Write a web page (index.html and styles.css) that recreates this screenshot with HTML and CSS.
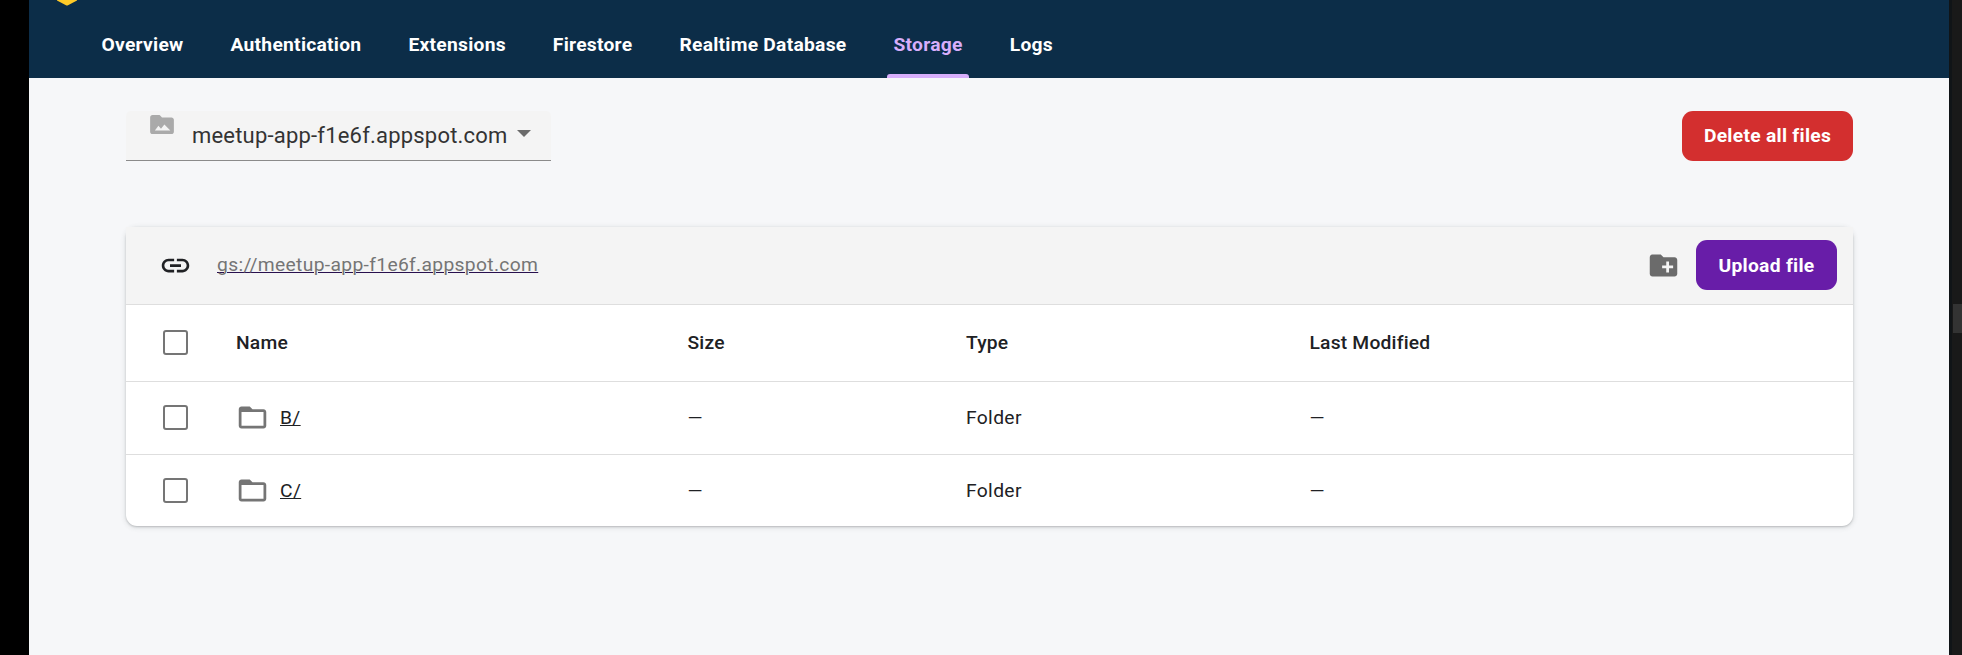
FILE: index.html
```html
<!DOCTYPE html>
<html lang="en">
<head>
<meta charset="utf-8">
<title>Storage</title>
<link rel="stylesheet" href="styles.css">
</head>
<body>
<div class="window">
  <main class="page">
    <header class="appbar">
      <svg class="logo" viewBox="0 0 20 6" width="20" height="6"><path d="M0 0h20v.6L11 5.2q-1 .5-2 0L0 .6z" fill="#ffca28"/></svg>
      <nav class="tabs">
        <a class="tab">Overview</a>
        <a class="tab">Authentication</a>
        <a class="tab">Extensions</a>
        <a class="tab">Firestore</a>
        <a class="tab">Realtime Database</a>
        <a class="tab tab-active">Storage</a>
        <a class="tab">Logs</a>
      </nav>
    </header>
    <div class="content">
      <div class="toolbar">
        <div class="bucket">
          <svg class="bucket-icon" viewBox="2 4 20 16" width="24" height="19"><path fill="#aaa" d="M20 6h-8l-2-2H4c-1.1 0-1.99.9-1.99 2L2 18c0 1.100.9 2 2 2h16c1.100 0 2-.9 2-2V8c0-1.100-.9-2-2-2z"/><path fill="#f4f4f4" d="M6 17l3-4 2.150 2.580L14 12l5 5z"/></svg>
          <span class="bucket-name">meetup-app-f1e6f.appspot.com</span>
          <svg class="caret" viewBox="0 0 14 7" width="14" height="7"><path d="M0 0h14L7 7z" fill="#6b6b6b"/></svg>
        </div>
        <button class="button danger">Delete all files</button>
      </div>
      <section class="card">
        <div class="card-bar">
          <svg class="link-icon" viewBox="0 0 24 24" width="33" height="33"><path fill="#202124" d="M3.900 12c0-1.710 1.390-3.100 3.100-3.100h4V7H7c-2.760 0-5 2.240-5 5s2.240 5 5 5h4v-1.900H7c-1.710 0-3.100-1.390-3.100-3.100zM8 13h8v-2H8v2zm9-6h-4v1.900h4c1.710 0 3.100 1.390 3.100 3.100s-1.390 3.100-3.100 3.100h-4V17h4c2.760 0 5-2.240 5-5s-2.240-5-5-5z"/></svg>
          <a class="path"><span>gs://meetup-app-f1e6f.appspot.com</span></a>
          <svg class="new-folder" viewBox="0 0 24 24" width="33" height="33"><path fill="#6b6b6b" d="M20 6h-8l-2-2H4c-1.110 0-1.990.89-1.990 2L2 18c0 1.110.89 2 2 2h16c1.110 0 2-.89 2-2V8c0-1.110-.89-2-2-2zm-1 8h-3v3h-2v-3h-3v-2h3V9h2v3h3v2z"/></svg>
          <button class="button primary">Upload file</button>
        </div>
        <div class="row row-head">
          <span class="checkbox"></span>
          <span>Name</span><span>Size</span><span>Type</span><span>Last Modified</span>
        </div>
        <div class="row">
          <span class="checkbox"></span>
          <span class="file"><svg viewBox="0 0 24 24" width="33" height="33"><path fill="#757575" d="M9.170 6l2 2H20v10H4V6h5.170M10 4H4c-1.100 0-1.990.9-1.990 2L2 18c0 1.100.9 2 2 2h16c1.100 0 2-.9 2-2V8c0-1.100-.9-2-2-2h-8l-2-2z"/><path fill="#757575" d="M3 5h7l2 3H3z"/></svg><a>B/</a></span>
          <span>—</span><span>Folder</span><span>—</span>
        </div>
        <div class="row">
          <span class="checkbox"></span>
          <span class="file"><svg viewBox="0 0 24 24" width="33" height="33"><path fill="#757575" d="M9.170 6l2 2H20v10H4V6h5.170M10 4H4c-1.100 0-1.990.9-1.990 2L2 18c0 1.100.9 2 2 2h16c1.100 0 2-.9 2-2V8c0-1.100-.9-2-2-2h-8l-2-2z"/><path fill="#757575" d="M3 5h7l2 3H3z"/></svg><a>C/</a></span>
          <span>—</span><span>Folder</span><span>—</span>
        </div>
      </section>
    </div>
  </main>
  <aside class="edge"><div class="thumb"></div></aside>
</div>
</body>
</html>
```
FILE: styles.css
```css
* { box-sizing: border-box; }
body { margin: 0; background: #000; font-family: Roboto, sans-serif; color: #202124; }
.window { display: flex; height: 655px; padding-left: 29px; overflow: hidden; }
.page { width: 1920px; background: #f6f7f9; }
.appbar { height: 78px; background: #0c2d48; }
.logo { display: block; margin-left: 28px; }
.tabs { display: flex; height: 72px; padding-left: 49px; }
.tab {
  position: relative; padding: 27px 23.5px 0; font-size: 19.25px; line-height: 24px;
  font-weight: 700; letter-spacing: 0.26px; color: #fff; white-space: nowrap;
}
.tab-active { color: #d7aefb; }
.tab-active::after {
  content: ""; position: absolute; left: 17px; right: 17px; bottom: 0; height: 4px;
  background: #d7aefb; border-radius: 3px 3px 0 0;
}
.content { padding: 33px 96px 0 97px; }
.toolbar { display: flex; justify-content: space-between; align-items: flex-start; height: 116px; }
.bucket {
  display: flex; width: 425px; height: 50px; padding-left: 24px;
  background: #f4f4f4; border-bottom: 1px solid #8b8b8b; border-radius: 5px 5px 0 0;
}
.bucket-icon { margin-top: 4px; }
.bucket-name { margin: 11px 0 0 18px; width: 325px; font-size: 22px; line-height: 28px; letter-spacing: 0.2px; color: #333; white-space: nowrap; }
.caret { margin-top: 19px; }
.button {
  height: 50px; padding: 0; border: 0; border-radius: 11px; color: #fff;
  font: 700 19.25px/50px Roboto, sans-serif; letter-spacing: 0.28px;
}
.danger { width: 171px; background: #d32f2f; }
.primary { width: 141px; padding-top: 1px; line-height: 49px; background: #681da8; }
.card {
  height: 299px; background: #fff; border-radius: 11px;
  box-shadow: 0 1px 2px rgba(60,64,67,.25), 0 1px 5px 1px rgba(60,64,67,.12);
}
.card-bar {
  display: flex; align-items: center; height: 78px; padding: 0 16px 1px 33px;
  background: #f4f4f4; border-bottom: 1px solid #dedede;
}
.path { flex: 1; margin: 0 0 2px 25px; font-size: 19.25px; letter-spacing: 0.33px; color: #28104e; text-decoration: underline 1px; }
.path span { color: #757575; }
.new-folder { margin-right: 16px; }
.row {
  display: grid; grid-template-columns: 110px 451.5px 278.5px 343.5px 1fr; align-items: center;
  height: 73px; padding-bottom: 1px; border-bottom: 1px solid #dedede; font-size: 19.25px; letter-spacing: 0.35px;
}
.row-head { height: 77px; font-weight: 500; letter-spacing: 0.2px; }
.row:last-child { height: 71px; padding-bottom: 0; border-bottom: 0; }
.checkbox { width: 25px; height: 25px; margin-left: 37px; border: 2px solid #757575; border-radius: 3px; }
.file { display: flex; align-items: center; }
.file a { margin-left: 11px; text-decoration: underline 1px; }
.edge { width: 13px; background: #191919; border-left: 3px solid #101417; padding: 304px 0 0 1px; }
.thumb { height: 29px; background: #333; }
```
